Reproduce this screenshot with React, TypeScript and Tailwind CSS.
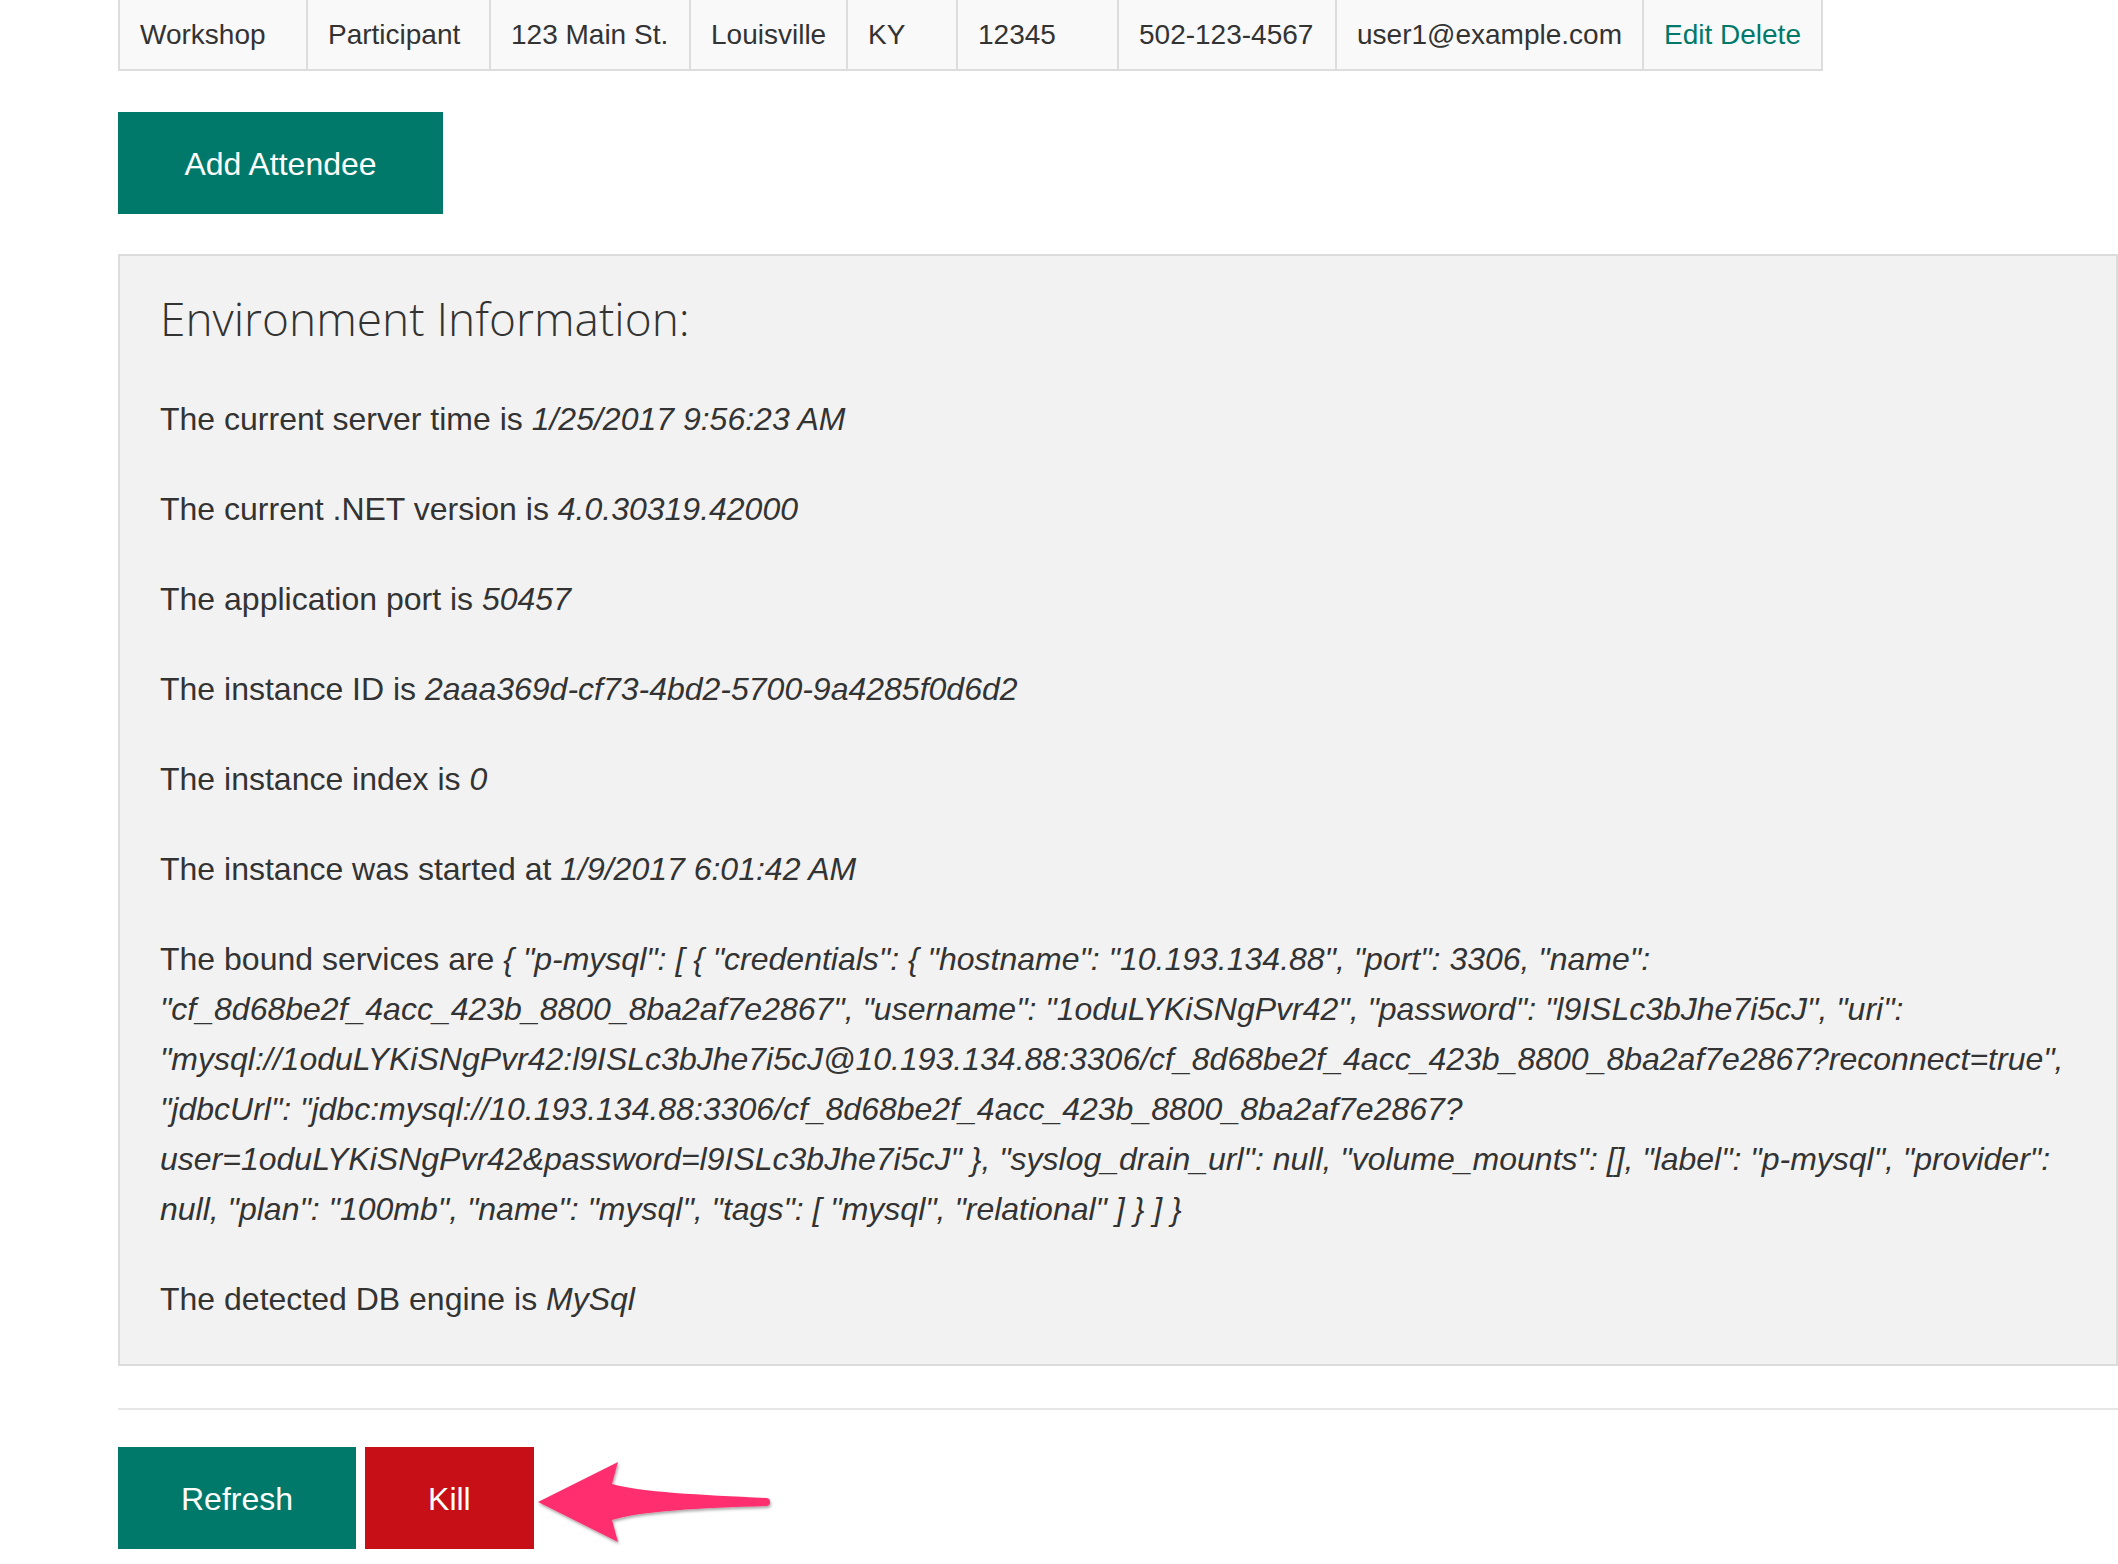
import React from 'react';

const cells = [
  { label: 'Workshop', width: 'w-[190px] border-l-2 pl-[20px]' },
  { label: 'Participant', width: 'w-[183px] pl-[20px]' },
  { label: '123 Main St.', width: 'w-[200px] pl-[20px]' },
  { label: 'Louisville', width: 'w-[157px] pl-[20px]' },
  { label: 'KY', width: 'w-[110px] pl-[20px]' },
  { label: '12345', width: 'w-[161px] pl-[20px]' },
  { label: '502-123-4567', width: 'w-[218px] pl-[20px]' },
  { label: 'user1@example.com', width: 'w-[307px] pl-[20px]' },
];

const boundServices =
  '{ "p-mysql": [ { "credentials": { "hostname": "10.193.134.88", "port": 3306, "name": "cf_8d68be2f_4acc_423b_8800_8ba2af7e2867", "username": "1oduLYKiSNgPvr42", "password": "l9ISLc3bJhe7i5cJ", "uri": "mysql://1oduLYKiSNgPvr42:l9ISLc3bJhe7i5cJ@10.193.134.88:3306/cf_8d68be2f_4acc_423b_8800_8ba2af7e2867?reconnect=true", "jdbcUrl": "jdbc:mysql://10.193.134.88:3306/cf_8d68be2f_4acc_423b_8800_8ba2af7e2867?user=1oduLYKiSNgPvr42&password=l9ISLc3bJhe7i5cJ" }, "syslog_drain_url": null, "volume_mounts": [], "label": "p-mysql", "provider": null, "plan": "100mb", "name": "mysql", "tags": [ "mysql", "relational" ] } ] }';

function Info({ label, value, last }: { label: string; value: string; last?: boolean }) {
  return (
    <p className={`text-[32px] leading-[50px] ${last ? 'mb-0' : 'mb-[40px]'}`}>
      {label} <em>{value}</em>
    </p>
  );
}

export default function App() {
  return (
    <div
      className="relative w-[2118px] min-h-[1564px] overflow-hidden bg-white text-[#333]"
      style={{ fontFamily: '"Liberation Sans", Arial, Helvetica, sans-serif' }}
    >
      <div className="pl-[118px]">
        {/* last row of the attendee table */}
        <div className="flex text-[28px]">
          {cells.map((c) => (
            <div
              key={c.label}
              className={`${c.width} h-[71px] flex items-center bg-[#f9f9f9] border-r-2 border-b-2 border-[#dddddd]`}
            >
              {c.label}
            </div>
          ))}
          <div className="w-[179px] h-[71px] flex items-center pl-[20px] bg-[#f9f9f9] border-r-2 border-b-2 border-[#dddddd] text-[#00796b]">
            <a href="#">Edit</a>&nbsp;<a href="#">Delete</a>
          </div>
        </div>

        <button className="mt-[41px] h-[102px] w-[325px] flex items-center justify-center pt-[2px] bg-[#00796b] text-white text-[32px]">
          Add Attendee
        </button>

        {/* environment panel */}
        <div className="mt-[40px] w-[2000px] border-2 border-[#dcdcdc] bg-[#f2f2f2] px-[40px] pt-[34px] pb-[40px]">
          <h2
            className="text-[46px] leading-[56px] font-light mb-[48px] text-[#333]"
            style={{ fontFamily: '"Open Sans", "Noto Sans", sans-serif' }}
          >
            Environment Information:
          </h2>
          <Info label="The current server time is" value="1/25/2017 9:56:23 AM" />
          <Info label="The current .NET version is" value="4.0.30319.42000" />
          <Info label="The application port is" value="50457" />
          <Info label="The instance ID is" value="2aaa369d-cf73-4bd2-5700-9a4285f0d6d2" />
          <Info label="The instance index is" value="0" />
          <Info label="The instance was started at" value="1/9/2017 6:01:42 AM" />
          <Info label="The bound services are" value={boundServices} />
          <Info label="The detected DB engine is" value="MySql" last />
        </div>

        <div className="mt-[42px] h-[2px] w-[2000px] bg-[#e6e6e6]" />

        <div className="mt-[37px] flex gap-[9px]">
          <button className="h-[102px] px-[63px] pt-[2px] bg-[#00796b] text-white text-[32px]">Refresh</button>
          <button className="h-[102px] px-[63px] pt-[2px] bg-[#c60f16] text-white text-[32px]">Kill</button>
        </div>
      </div>

      {/* annotation arrow pointing at Kill */}
      <svg
        className="absolute left-[530px] top-[1455px]"
        width="250"
        height="95"
        viewBox="0 0 250 95"
      >
        <defs>
          <filter id="arrowShadow" x="-10%" y="-20%" width="120%" height="140%">
            <feDropShadow dx="1" dy="2" stdDeviation="1.5" floodColor="#000" floodOpacity="0.35" />
          </filter>
        </defs>
        <path
          d="M8 47 L88 7 L82 29 C110 37 170 40 236 43 A4 4 0 0 1 236 51 C170 53 110 56 82 65 L88 87 Z"
          fill="#ff2e6e"
          filter="url(#arrowShadow)"
        />
      </svg>
    </div>
  );
}
